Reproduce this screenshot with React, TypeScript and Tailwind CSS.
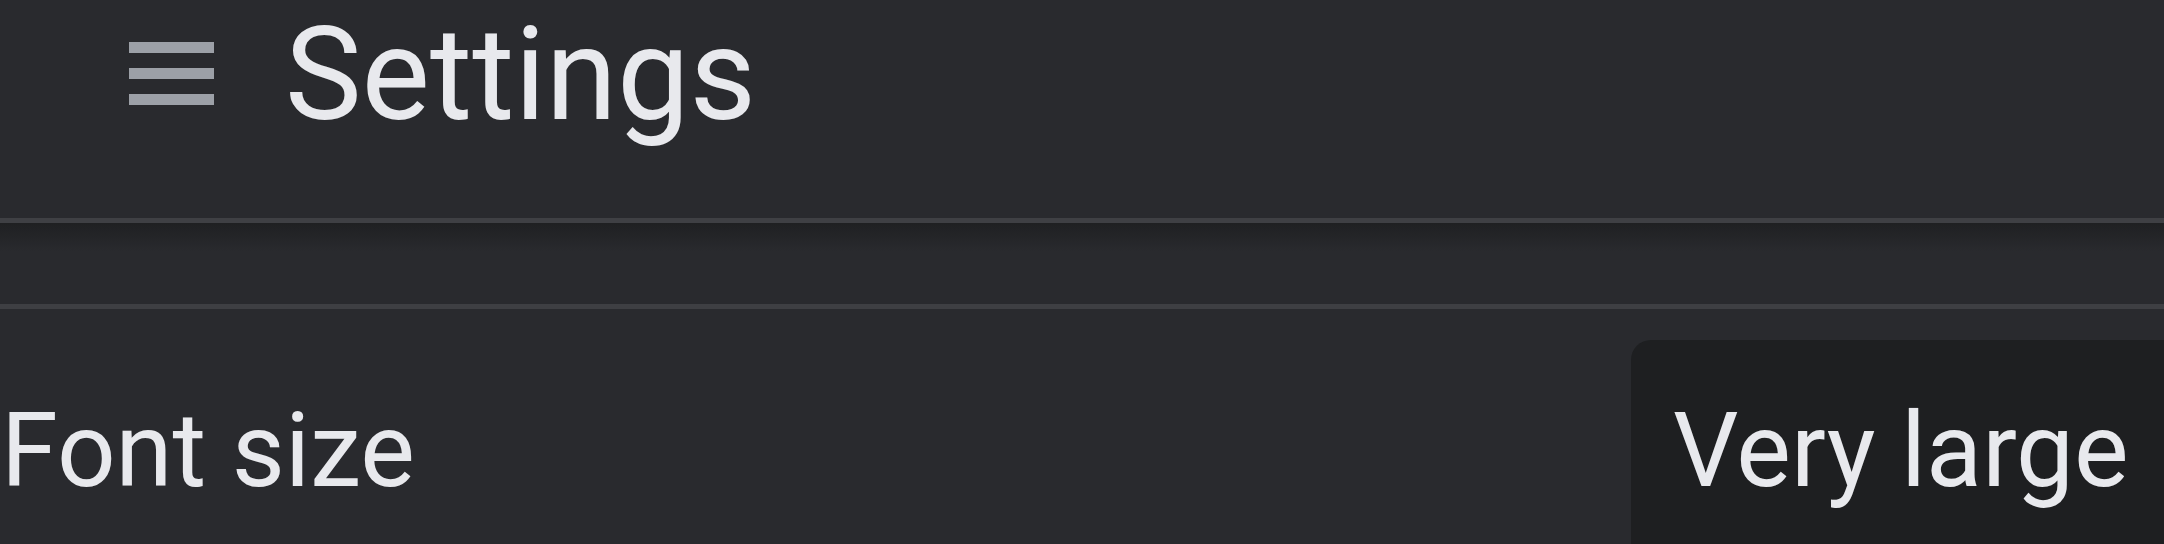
export default function App() {
  return (
    <div className="w-[2164px] h-[544px] overflow-hidden bg-[#292a2e] text-[#e8e9ed] font-['Roboto',sans-serif]">
      <header className="flex h-[218px] items-start">
        <div className="ml-[129px] mt-[42px] flex w-[85px] flex-col gap-[15.5px]">
          <span className="block h-[10.5px] bg-[#9ca0a7]" />
          <span className="block h-[10.5px] bg-[#9ca0a7]" />
          <span className="block h-[10.5px] bg-[#9ca0a7]" />
        </div>
        <h1 className="ml-[71px] -mt-[2px] text-[129px] leading-[154px] font-normal">
          Settings
        </h1>
      </header>

      <div className="h-[5px] bg-[#3f4044]" />
      <div className="h-[81px]">
        <div className="h-[28px] bg-gradient-to-b from-[#1f2022] to-[#292a2e]" />
      </div>
      <div className="h-[5px] bg-[#3e3f43]" />

      <div className="flex items-start">
        <div className="w-[1631px] shrink-0 pt-[81px] pl-[1px] text-[103px] leading-[122px]">
          Font size
        </div>
        <div className="w-[600px] h-[300px] shrink-0 mt-[31px] rounded-[20px] bg-[#1e1f21] pl-[42px] pt-[50px] text-[103px] leading-[122px]">
          Very large
        </div>
      </div>
    </div>
  )
}
